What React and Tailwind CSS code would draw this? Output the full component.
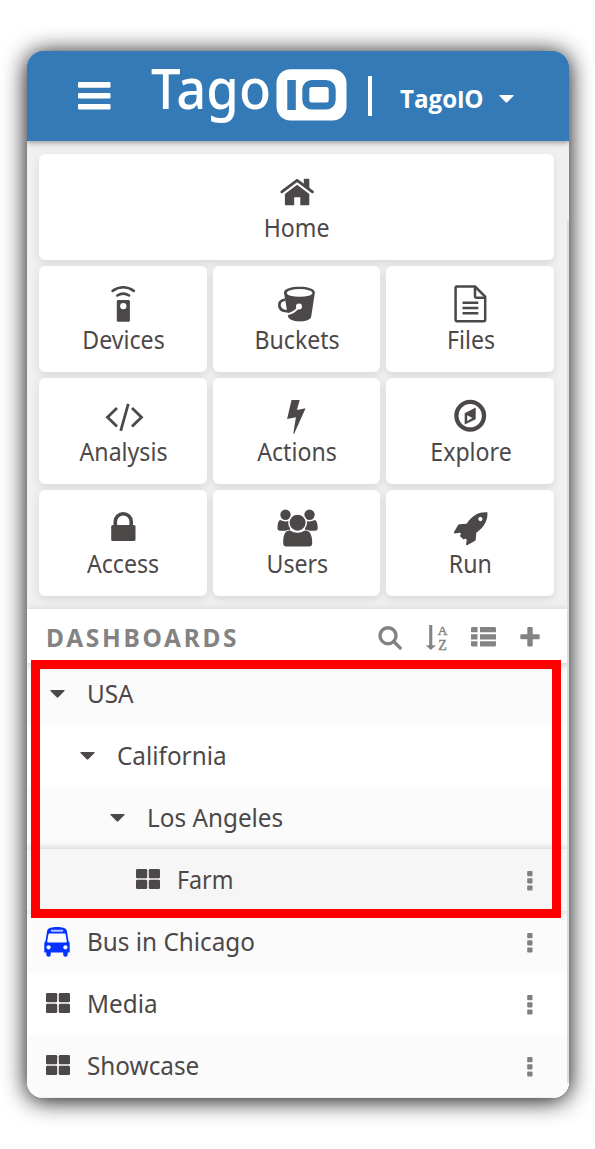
import React from "react";

const Caret = ({ className = "" }) => (
  <svg className={"h-2 w-[15px] " + className} viewBox="0 0 15 8" fill="currentColor">
    <path d="M1 0h13q1 .2.5 1L8.3 7.3q-.8.8-1.6 0L.5 1Q0 .2 1 0z" />
  </svg>
);

const Grid4 = () => (
  <svg className="ml-px h-5 w-6" viewBox="0 0 24 20" fill="currentColor">
    <rect width="11.2" height="9.2" rx="1.2" />
    <rect x="12.8" width="11.2" height="9.2" rx="1.2" />
    <rect y="10.8" width="11.2" height="9.2" rx="1.2" />
    <rect x="12.8" y="10.8" width="11.2" height="9.2" rx="1.2" />
  </svg>
);

const Bus = () => (
  <svg className="h-[30px] w-[26px]" viewBox="0 0 26 30">
    <path
      fill="#0433ff"
      d="M13 0c5 0 9 .8 9.800 3.600L24.500 14q1.200 1 1.200 3v8.500h-2v2a2.200 2.200 0 0 1-4.500 0v-2H6.800v2a2.200 2.200 0 0 1-4.500 0v-2H.3V17q0-2 1.200-3L3.200 3.600C4 .8 8 0 13 0z"
    />
    <rect x="6.800" y="2.700" width="12.400" height="2" rx=".9" fill="#b9c5ff" />
    <path fill="#fbfbfb" d="M5.600 6.400h14.800q1 0 1.200 1l1.200 7q.1 1-1 1H4.200q-1.100 0-1-1l1.200-7q.2-1 1.200-1z" />
    <circle cx="4.600" cy="20.300" r="2.100" fill="#fbfbfb" />
    <circle cx="21.400" cy="20.300" r="2.100" fill="#fbfbfb" />
  </svg>
);

const icons = {
  Home: (
    <>
      <path d="M26.800 9.600Q26.800 8.800 27.600 8.800H31.500Q32.300 8.800 32.300 9.600V19L26.800 14.500z" />
      <path d="M4.800 21.800L20.100 10.300L35.500 21.800" fill="none" stroke="currentColor" strokeWidth="2.800" strokeLinecap="round" strokeLinejoin="round" />
      <path d="M20.100 14.800L32.300 24V34.500Q32.300 35.300 31.500 35.300H23.300V27.200H17.200V35.300H8.800Q7.900 35.300 7.900 34.500V24z" />
    </>
  ),
  Devices: (
    <>
      <g fill="none" stroke="currentColor" strokeWidth="2.600" strokeLinecap="round">
        <path d="M9.600 8.800Q20.200 1.800 30.800 8.800" />
        <path d="M14.300 13.500Q20.200 9.700 26.100 13.500" />
      </g>
      <rect x="13.800" y="18" width="13.100" height="21.800" rx="1.400" />
      <circle cx="20.300" cy="24.100" r="3.200" fill="#fff" />
    </>
  ),
  Buckets: (
    <>
      <path d="M7.900 10.500C8 2.800 38.800 2.800 38.900 10.500L35.200 34.500C34 41 14.500 41 12.200 35z" />
      <ellipse cx="23.600" cy="10.900" rx="12.800" ry="3.900" fill="#fff" />
      <path d="M9 17.500C4.500 18.500 2.800 21 3.400 24C4.300 29 10 30.300 15 28" fill="none" stroke="currentColor" strokeWidth="2.800" />
      <path d="M9.800 32.300C16 32 20 29 23 24.500" fill="none" stroke="#fff" strokeWidth="2.200" />
      <circle cx="23" cy="24.400" r="3" fill="#fff" />
    </>
  ),
  Files: (
    <g fill="none" stroke="currentColor" strokeWidth="2.500" strokeLinejoin="round">
      <path d="M6.600 4.500H25L35.200 14.700V38Q35.200 39.200 34.200 39.200H6.600Q5.600 39.200 5.600 38V5.500Q5.600 4.500 6.600 4.500z" />
      <path d="M25 5V14.600Q25 15.700 26 15.700H35" />
      <path d="M12.500 20.700H28.300M12.500 26H28.300M12.500 31.300H28.300" />
    </g>
  ),
  Analysis: (
    <path
      d="M14 14L4.500 23.300L14 32.600M29 14L38.500 23.300L29 32.600M25.300 9.800L17.700 36.800"
      fill="none"
      stroke="currentColor"
      strokeWidth="2.800"
    />
  ),
  Actions: <path d="M15.500 6H23.700L20.900 15.900L29.600 14.300L18 40L17.300 39.500L19.900 23.300L11.100 24.900z" />,
  Explore: (
    <>
      <circle cx="20.200" cy="21.700" r="13.800" fill="none" stroke="currentColor" strokeWidth="4.300" />
      <path d="M25.700 13.600V25.300L14.700 30.600V19.200z" />
      <path d="M17.200 21.300L22.400 24.100L17.200 27z" fill="#fff" />
    </>
  ),
  Access: (
    <>
      <rect x="8.200" y="19" width="24.300" height="16" rx="1.600" />
      <path d="M12.300 20V15.500A7.950 7.800 0 0 1 28.200 15.500V20" fill="none" stroke="currentColor" strokeWidth="3.600" />
    </>
  ),
  Users: (
    <>
      <circle cx="9.500" cy="8.700" r="5.200" />
      <circle cx="33.500" cy="8.700" r="5.200" />
      <path d="M4 14Q9.500 16.500 14 14.500V24.700H4Q1.500 24.700 1.500 22Q1.400 15.500 4 14z" />
      <path d="M39 14Q33.500 16.500 29 14.500V24.700H39Q41.700 24.700 41.700 22Q41.700 15.500 39 14z" />
      <path
        d="M14 24.500Q21.500 29 29 24.500C34 24 36.200 29 36.200 37Q36.200 40.600 33 40.600H10.400Q7.200 40.600 7.200 37C7.200 29 9 24 14 24.500z"
        stroke="#fff"
        strokeWidth="1.400"
        paintOrder="stroke"
      />
      <circle cx="21.600" cy="16.700" r="8.700" stroke="#fff" strokeWidth="1.500" />
    </>
  ),
  Run: (
    <>
      <path d="M37.400 6.300C30 5.600 23.500 8 16.500 17.800L9.500 18.300Q8.300 18.400 7.800 19.500L3.900 26.300Q3.500 27.400 4.700 27.400L10 26.700L11 28L9.800 30L13.600 33.500L15.500 32.500L16.800 33.700L16 38.300Q16.300 39.600 17.500 39L24.800 35Q25.800 34.300 25.800 33.200L26.300 26.800C34.500 21 38 14 37.400 6.300z" />
      <circle cx="30.400" cy="13.100" r="2.100" fill="#fff" />
    </>
  ),
};

const tiles = ["Home", "Devices", "Buckets", "Files", "Analysis", "Actions", "Explore", "Access", "Users", "Run"];

const Tile = ({ name }) => (
  <div
    className={
      "flex h-[106px] flex-col items-center rounded-md bg-white pt-4 shadow-[0_3px_8px_rgba(0,0,0,0.1)] " +
      (name === "Home" ? "col-span-3" : "")
    }
  >
    <svg className="h-10 w-10 shrink-0 overflow-visible" viewBox="0 0 40 40" fill="currentColor">
      {icons[name]}
    </svg>
    <span className="mt-0.5 ml-px scale-x-[.925] text-[25px] leading-[30px] whitespace-nowrap">{name}</span>
  </div>
);

const Dots = () => (
  <svg className="mt-px h-5 w-1.5 text-[#808080]" viewBox="0 0 6 20" fill="currentColor">
    <rect x=".2" y="0" width="5.300" height="5.200" rx=".8" />
    <rect x=".2" y="7.200" width="5.300" height="5.200" rx=".8" />
    <rect x=".2" y="14.400" width="5.300" height="5.200" rx=".8" />
  </svg>
);

const rows = [
  { name: "USA", kind: "folder", pad: "pl-[15px]", bg: "bg-[#fbfbfb]" },
  { name: "California", kind: "folder", pad: "pl-[45px]", bg: "bg-white" },
  { name: "Los Angeles", kind: "folder", pad: "pl-[75px]", bg: "bg-[#fbfbfb]" },
  { name: "Farm", kind: "grid", pad: "pl-[105px]", bg: "bg-[#f6f6f6] relative shadow-[0_0_8px_rgba(0,0,0,0.2)]" },
  { name: "Bus in Chicago", kind: "bus", pad: "pl-[15px]", bg: "bg-[#fbfbfb]" },
  { name: "Media", kind: "grid", pad: "pl-[15px]", bg: "bg-white" },
  { name: "Showcase", kind: "grid", pad: "pl-[15px]", bg: "bg-[#fbfbfb]" },
];

const Row = ({ row }) => (
  <div className={"flex h-[62px] items-center pr-[36px] " + row.pad + " " + row.bg}>
    <span className={"flex w-[30px] shrink-0 justify-center" + (row.kind === "grid" ? " mb-0.5" : "")}>
      {row.kind === "folder" && <Caret />}
      {row.kind === "grid" && <Grid4 />}
      {row.kind === "bus" && <Bus />}
    </span>
    <span
      className={
        "mb-0.5 ml-[14.500px] flex-1 origin-left text-[25px] leading-[30px] whitespace-nowrap " +
        (row.name === "Farm" ? "scale-x-[.93]" : "scale-x-[.972]")
      }
    >
      {row.name}
    </span>
    {row.kind !== "folder" && <Dots />}
  </div>
);

export default function App() {
  return (
    <div className="h-[1149px] w-[595px] overflow-hidden bg-white pt-[51px] pl-[27px] font-['Noto_Sans','Open_Sans',sans-serif] text-[#4d4848]">
      <div className="relative h-[1047px] w-[542px] rounded-2xl shadow-[0_2px_24px_rgba(0,0,0,1)]">
        <div className="flex h-full flex-col overflow-hidden rounded-2xl bg-[#f0f0f0]">
          <header className="relative z-10 flex h-[90px] shrink-0 items-start bg-[#347ab6] text-white shadow-[0_1px_6px_rgba(0,0,0,0.45)]">
            <svg className="mt-[31px] ml-[51px] h-7 w-[33px] shrink-0" viewBox="0 0 33 28" fill="currentColor">
              <rect y="0" width="32.500" height="5.700" rx="1" />
              <rect y="11" width="32.500" height="5.600" rx="1" />
              <rect y="22" width="32.500" height="5.500" rx="1" />
            </svg>
            <div className="-mr-2 ml-[40px] w-[133px] shrink-0 origin-left scale-x-[.938] text-[56px] leading-[72px] font-medium whitespace-nowrap">
              Tago
            </div>
            <svg className="mt-[17.500px] h-[52px] w-[71px] shrink-0" viewBox="0 0 71 52">
              <rect x=".5" y=".2" width="70" height="51.300" rx="14" fill="#fff" />
              <rect x="11.300" y="11" width="8.500" height="30" fill="#347ab6" />
              <rect x="29.800" y="14.500" width="26.400" height="22.500" rx="6" fill="none" stroke="#347ab6" strokeWidth="7" />
            </svg>
            <div className="mt-[25px] ml-[21px] h-10 w-1 shrink-0 bg-white" />
            <div className="mt-8 ml-[28px] w-[99px] shrink-0 origin-left scale-x-[.985] font-['Open_Sans',sans-serif] text-[24.500px] leading-8 font-bold whitespace-nowrap">
              Tago<span className="font-[Roboto,sans-serif]">I</span>O
            </div>
            <Caret className="mt-[44px] shrink-0" />
          </header>

          <section className="grid h-[468px] shrink-0 grid-cols-3 content-start gap-1.5 pt-[13px] pr-[15px] pl-3">
            {tiles.map((t) => (
              <Tile key={t} name={t} />
            ))}
          </section>

          <div className="relative flex h-[54px] shrink-0 items-center bg-white pr-[29px] pl-5 text-[#838383] shadow-[0_2px_8px_rgba(0,0,0,0.2)]">
            <h2 className="mt-[3px] -ml-px flex-1 text-[24.500px] leading-8 font-bold tracking-[2.700px] whitespace-nowrap">
              DASHBOARDS
            </h2>
            <div className="flex h-[30px] items-start gap-[22px] pt-1">
              <svg className="mt-px -mr-px h-6 w-6 -translate-x-0.5" viewBox="0 0 24 24" fill="none" stroke="currentColor" strokeWidth="3.400">
                <circle cx="10" cy="9.700" r="8" />
                <path d="M15.700 15.500L22.200 22" strokeLinecap="round" />
              </svg>
              <svg className="h-[26px] w-6 overflow-visible" viewBox="0 0 24 26" fill="currentColor">
                <path d="M4.200 0H7.300V20.200H11L5.800 25L.8 20.200H4.200z" />
                <text x="12.800" y="9.800" fontSize="13.500" fontFamily="Liberation Serif, serif" stroke="currentColor" strokeWidth=".4">
                  A
                </text>
                <text x="13.200" y="25" fontSize="14" fontFamily="Liberation Serif, serif" stroke="currentColor" strokeWidth=".4">
                  Z
                </text>
              </svg>
              <svg className="mt-0.5 mr-0.5 h-5 w-[25px]" viewBox="0 0 25 20" fill="currentColor">
                <path d="M1 0H6.500V5.200H0V1zM0 7.200H6.500V12.400H0zM0 14.200H6.500V19.500H1L0 18.500zM9 0H24L25 1V5.200H9zM9 7.200H25V12.400H9zM9 14.200H25V18.500L24 19.500H9z" />
              </svg>
              <svg className="mt-0.5 h-5 w-5" viewBox="0 0 20 20" fill="currentColor">
                <path d="M8.300 0h3.400q1 0 1 1v6.200h6q1 0 1 1v3q0 1-1 1h-6v6.200q0 1-1 1H8.300q-1 0-1-1v-6.200h-6q-1 0-1-1v-3q0-1 1-1h6V1q0-1 1-1z" />
              </svg>
            </div>
          </div>

          <div className="flex flex-col">
            {rows.map((r) => (
              <Row key={r.name} row={r} />
            ))}
          </div>
        </div>
        <div className="absolute top-[170px] right-0 h-[862px] w-0.5 bg-[#dddddd]" />
        <div className="absolute top-[609px] left-1 h-[258px] w-[530px] border-9 border-[#ff0000]" />
      </div>
    </div>
  );
}
